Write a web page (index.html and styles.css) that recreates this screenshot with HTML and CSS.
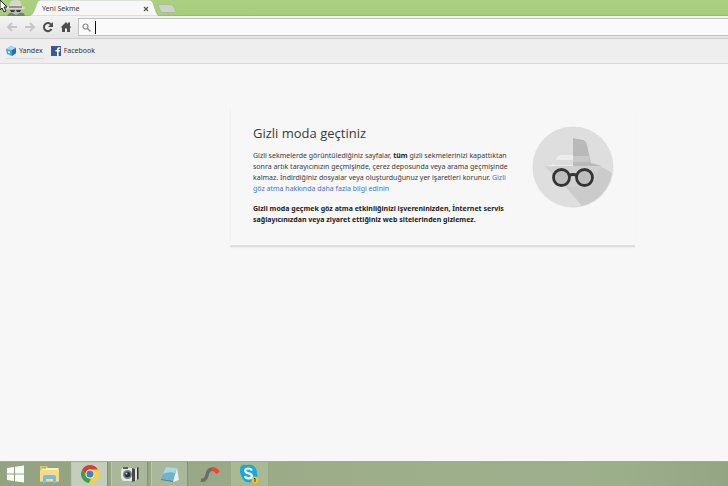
FILE: index.html
```html
<!DOCTYPE html>
<html lang="tr">
<head>
<meta charset="utf-8">
<title>Yeni Sekme</title>
<link rel="stylesheet" href="styles.css">
</head>
<body>
<header class="browser">
  <div class="tabstrip">
    <svg class="spy" width="32" height="16" viewBox="0 0 32 16" aria-hidden="true">
      <path d="M9 6 11 1Q15 -1 20 1L22 6Q26 7 25 9Q16 11 6 9Q6 7 9 6Z" fill="#d4d8cf"/>
      <path d="M9 7h13" stroke="#8e9788" stroke-width="2"/>
      <path d="M9 9h13l-1 5H11Z" fill="#b5bbaf"/>
      <path d="M10 10h5l-1 2h-3zM16 10h5l-1 2h-3z" fill="#393f38"/>
      <path d="M7 16Q9 12 12 13L16 15 20 13Q24 12 25 16Z" fill="#747b70"/>
      <path d="M0 0V10L2 8 4 12 6 11 4 7H7Z" fill="#fff" stroke="#222" stroke-width="1"/>
    </svg>
    <div class="tab">
      <svg class="tab-shape" viewBox="0 0 129 16" preserveAspectRatio="none" aria-hidden="true"><path d="M0 16Q3 14 4 11L7 3Q8 0 11 0H119Q122 0 123 3L126 12Q127 15 129 16Z" fill="#f7f8f6" stroke="#a2b48f" stroke-width=".6"/></svg>
      <span class="tab-title">Yeni Sekme</span>
      <button class="close" aria-label="Sekmeyi kapat"><svg width="6" height="6" viewBox="0 0 6 6"><path d="M1 1 5 5M5 1 1 5" stroke="#555" stroke-width="1.2"/></svg></button>
    </div>
    <button class="new-tab" aria-label="Yeni sekme"><svg width="20" height="9" viewBox="0 0 20 9"><path d="M1 1Q1 .5 3 .5H14Q16 .5 17 3L19 8Q19 8.500 17 8.500H6Q4 8.500 3 6Z" fill="#ccd2c4" stroke="#a9b898" stroke-width=".8"/></svg></button>
  </div>
  <div class="toolbar">
    <button aria-label="Geri"><svg width="12" height="12" viewBox="0 0 12 12"><path d="M11 6H3M6 2 2 6l4 4" fill="none" stroke="#c6c6c6" stroke-width="2"/></svg></button>
    <button aria-label="İleri"><svg width="12" height="12" viewBox="0 0 12 12"><path d="M1 6h8M6 2l4 4-4 4" fill="none" stroke="#c6c6c6" stroke-width="2"/></svg></button>
    <button aria-label="Yenile"><svg width="12" height="12" viewBox="0 0 12 12"><path d="M9 3.500A4 4 0 1 0 9.500 8" fill="none" stroke="#4d4d4d" stroke-width="2"/><path d="M11 1v5H6Z" fill="#4d4d4d"/></svg></button>
    <button aria-label="Ana sayfa"><svg width="12" height="12" viewBox="0 0 12 12"><path d="M6 1 8 3V1.500h2V5l1.500 1.500H10V11H7V7.500H5V11H2V6.500H.5Z" fill="#4d4d4d"/></svg></button>
    <label class="omnibox">
      <svg width="9" height="9" viewBox="0 0 9 9" aria-hidden="true"><circle cx="3.500" cy="3.500" r="2.500" fill="none" stroke="#888" stroke-width="1.200"/><path d="M5.500 5.500 8.500 8.500" stroke="#888" stroke-width="1.400"/></svg>
      <span class="caret"></span>
      <input type="text" aria-label="Adres ve arama çubuğu">
    </label>
  </div>
  <nav class="bookmarks">
    <a class="hovered" href="#"><svg width="10" height="10" viewBox="0 0 10 10" aria-hidden="true"><path d="M0 3 5 0l5 2v5l-4 3-5-2Z" fill="#4ba3d9"/><path d="M0 3 5 0l5 2-4 2Z" fill="#a9d9f2"/><path d="M6 4l4-2v5l-4 3Z" fill="#276fae"/><path d="M2 5l2 .5v2L2 7Z" fill="#d8f0fb"/></svg>Yandex</a>
    <a href="#"><svg width="10" height="10" viewBox="0 0 10 10" aria-hidden="true"><path d="M0 0h10v10H0Z" fill="#3b5795"/><path d="M6 10V5.500H4.500V4H6V3Q6 1.200 8 1.200h1.300v1.500H8.200Q7.600 2.700 7.600 3.300V4h1.600L9 5.500H7.600V10Z" fill="#fff"/></svg>Facebook</a>
  </nav>
</header>
<main>
  <section class="card">
    <div class="message">
      <h1>Gizli moda geçtiniz</h1>
      <p>Gizli sekmelerde görüntülediğiniz sayfalar, <strong>tüm</strong> gizli sekmelerinizi kapattıktan<br>sonra artık tarayıcınızın geçmişinde, çerez deposunda veya arama geçmişinde<br>kalmaz. İndirdiğiniz dosyalar veya oluşturduğunuz yer işaretleri korunur. <a href="#">Gizli<br>göz atma hakkında daha fazla bilgi edinin</a></p>
      <p class="warning">Gizli moda geçmek göz atma etkinliğinizi işvereninizden, İnternet servis<br>sağlayıcınızdan veya ziyaret ettiğiniz web sitelerinden gizlemez.</p>
    </div>
    <svg class="incognito" width="82" height="82" viewBox="0 0 82 82" aria-hidden="true">
      <circle cx="41" cy="41" r="40.500" fill="#dedede"/>
      <path d="M34 61 61 51 68 40 80 47A40.500 40.500 0 0 1 50 80Z" fill="#cbcbcb"/>
      <path d="M12 40Q21 42 27 39H60L69 40 60 61H34Z" fill="#d0d0d0"/>
      <path d="M12 40Q20 40 23 37L25 31Q26 29 29 29H41V40Z" fill="#ededed"/>
      <path d="M24 34H41V39H22Z" fill="#dcdcdc"/>
      <path d="M41 12 51 14Q54 15 55 19L59 37 70 40H41Z" fill="#b9b9b9"/>
      <path d="M41 30H57L58 36H41Z" fill="#c9c9c9"/>
      <g fill="#bebebe" stroke="#343434" stroke-width="2.800"><circle cx="29.500" cy="51.500" r="8"/><circle cx="52.500" cy="51.500" r="8"/><path d="M37 49.500Q41 47.500 45 49.500" fill="none"/></g>
    </svg>
  </section>
</main>
<footer class="taskbar">
  <button aria-label="Başlat"><svg width="18" height="18" viewBox="0 0 18 18"><path d="M0 3 7 2V8.500H0ZM8 1.800 17 .5V8.500H8ZM0 9.500H7V16L0 15ZM8 9.500h9V17.500L8 16.200Z" fill="#fafbf7"/></svg></button>
  <button aria-label="Dosya Gezgini"><svg width="20" height="18" viewBox="0 0 20 18"><path d="M0 1h7l1 2h11v14H0Z" fill="#e5c568"/><path d="M2 3h16v10H2Z" fill="#fff3bd"/><path d="M0 5h19v11H0Z" fill="#f3dc8c"/><path d="M3 18V12Q3 10 5 10h9q2 0 2 2v6h-3v-4H6v4Z" fill="#73bde8"/><path d="M2 3h4" stroke="#75a868"/></svg></button>
  <button class="open active" aria-label="Chrome"><svg width="20" height="20" viewBox="0 0 20 20"><circle cx="10" cy="10" r="9" fill="#fad03b"/><path d="M2.200 5.500A9 9 0 0 1 17.800 5.500H10A4.500 4.500 0 0 0 6 12Z" fill="#e2392f"/><path d="M2.200 5.500 6.100 12.300Q8 15 11 14.400L9 19A9 9 0 0 1 2.200 5.500Z" fill="#3a9f52"/><circle cx="10" cy="10" r="4.500" fill="#f1f1e8"/><circle cx="10" cy="10" r="3.500" fill="#3e83bd"/></svg></button>
  <button class="open" aria-label="Kamera"><svg width="20" height="18" viewBox="0 0 20 18"><path d="M2 3h11v13H3L1 13V6Z" fill="#e6e8e4"/><path d="M12 3l3 1v12l-3 1Z" fill="#454b49"/><path d="M15 4l3-2v12l-3 2Z" fill="#dfe2dd"/><path d="M17 2.500l1.500-.5v12l-1.500 1Z" fill="#303634"/><path d="M3 2h5v2H3Z" fill="#59615c"/><circle cx="7.500" cy="9.500" r="4.500" fill="#758087"/><circle cx="7.500" cy="9.500" r="2.800" fill="#252f38"/><circle cx="6.500" cy="8.500" r="1" fill="#bbd2df"/></svg></button>
  <button class="open" aria-label="Not Defteri"><svg width="20" height="18" viewBox="0 0 20 18"><path d="M6 2 17 3 13 16 1 14Z" fill="#6fb2cb"/><path d="M6 2 17 3 15 8Q9 6 3 9Z" fill="#a5d9e7"/><path d="M17 3 19 15 13 17Z" fill="#e9efed"/><path d="M1 14 13 16v1L1 15Z" fill="#527f8d"/></svg></button>
  <button aria-label="Kaydedici"><svg width="20" height="18" viewBox="0 0 20 18"><path d="M10 14q6 2 8-5" fill="none" stroke="#9aa78f" stroke-width="2"/><path d="M1 15Q6 16 7 10 8 4 13 4" fill="none" stroke="#6b6d69" stroke-width="3.500"/><path d="M12 4Q16 4 18 8" fill="none" stroke="#ef452c" stroke-width="4"/></svg></button>
  <button class="skype" aria-label="Skype"><svg width="21" height="20" viewBox="0 0 21 20"><path d="M1 6Q1 0 7 1Q17 -1 18 9Q20 17 14 18Q4 20 2 11Q1 9 1 6Z" fill="#16a9df"/><path d="M13 6.500Q12 4.500 9.500 4.500C5 4.500 5 8.500 9.500 9.300C14.500 10.200 13.500 14.300 9.700 14.300Q6.500 14.300 6 12" fill="none" stroke="#fff" stroke-width="2.200"/><circle cx="16" cy="16" r="3.500" fill="#f5c132"/><path d="M15 15l1-1v4" fill="none" stroke="#49400f"/></svg></button>
</footer>
</body>
</html>
```
FILE: styles.css
```css
* { box-sizing: border-box; }
body {
  display: flex;
  flex-direction: column;
  min-height: 100vh;
  margin: 0;
  background: #f7f7f7;
  color: #3a3a3a;
  font: 7px/11px "Noto Sans", "Open Sans", sans-serif;
}
button { padding: 0; border: 0; background: none; }
button, .bookmarks a { display: flex; align-items: center; justify-content: center; }
svg { display: block; flex: none; }
a { color: #4a72c4; text-decoration: none; }

.tabstrip {
  display: flex;
  height: 16px;
  background: linear-gradient(#abd07f, #a6ce7b);
  border-bottom: 1px solid #9bb585;
}
.tab {
  position: relative;
  display: flex;
  align-items: center;
  justify-content: space-between;
  width: 129px;
  height: 16px;
  padding: 1px 10px 0 12px;
  margin-left: -2px;
}
.tab-shape { position: absolute; inset: 0; width: 100%; height: 100%; }
.tab-title, .close { position: relative; }
.new-tab { align-items: flex-start; padding-top: 4px; margin-left: -2px; }

.toolbar {
  display: flex;
  align-items: center;
  gap: 6px;
  height: 23px;
  padding-left: 6px;
  background: linear-gradient(#f4f4f4, #e4e4e4);
  border-bottom: 1px solid #cdcdcd;
}
.omnibox {
  display: flex;
  flex: 1;
  align-items: center;
  gap: 4px;
  height: 18px;
  padding-left: 3px;
  background: #fafafa;
  border: 1px solid #bfc3bd;
  border-right: 0;
}
.caret { width: 1px; height: 13px; background: #111; }
.omnibox input { flex: 1; min-width: 0; height: 14px; padding: 0; border: 0; outline: 0; background: none; font: inherit; }

.bookmarks {
  display: flex;
  align-items: center;
  gap: 6px;
  height: 25px;
  padding-left: 5px;
  background: #eee;
  border-bottom: 1px solid #dadada;
}
.bookmarks a { gap: 3px; height: 15px; padding: 0 1px; color: #333; border-bottom: 1px solid transparent; }
.bookmarks .hovered { border-color: #dcdcdc; }

main { flex: 1; padding: 44px 93px 0 230px; }
.card {
  display: flex;
  justify-content: space-between;
  height: 139px;
  padding: 16px 21px 0 22px;
  border: 1px solid #f1f1f1;
  border-width: 0 0 0 1px;
  border-bottom: 2px solid #dedede;
  box-shadow: 0 1px 1px #eee;
}
.message { white-space: nowrap; }
h1 { margin: 0 0 8px; font: 400 13px/18px "Open Sans", sans-serif; }
p { margin: 0 0 9px; line-height: 11px; }
strong, .warning { color: #222; font-weight: 700; }
.incognito { margin-top: 2px; }

.taskbar {
  display: flex;
  gap: 3px;
  height: 25px;
  background: linear-gradient(90deg, #93a381, #9eae8b 50%, #9caf8b 85%, #94a583);
  border-top: 1px solid #9eac94;
}
.taskbar button { width: 37px; border: 1px solid transparent; border-width: 0 1px; }
.taskbar button:first-child { width: 28px; padding-left: 4px; }
.taskbar .open { background: #a9b89a; border-color: #bdc8b1 #829170 #829170 #bdc8b1; }
.taskbar .active { background: #c5cebb; }
.taskbar .skype { background: #a8b994; }
```
